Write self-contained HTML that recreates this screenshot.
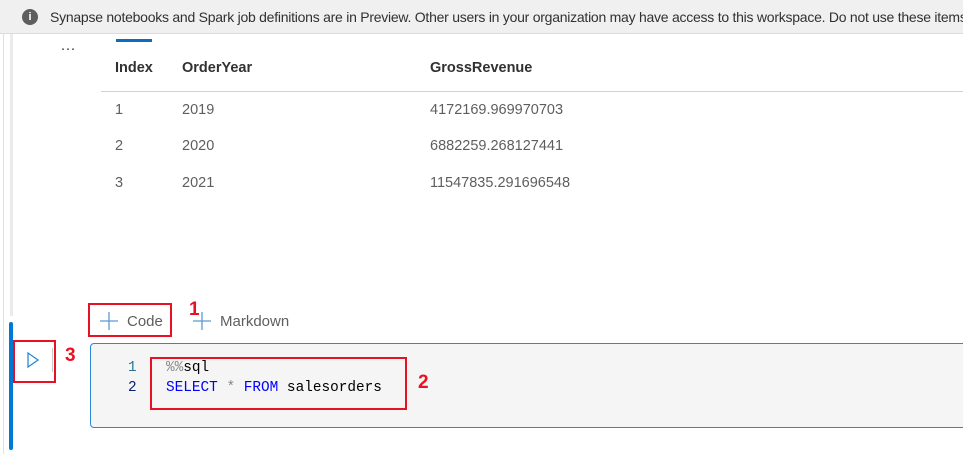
<!DOCTYPE html>
<html><head><style>
html,body{margin:0;width:963px;height:454px;overflow:hidden;}
body{background:#fff;position:relative;font-family:"Liberation Sans",sans-serif;}
.abs{position:absolute;}
.banner{left:0;top:0;width:963px;height:33px;background:#f0f0f0;border-bottom:1px solid #dcdcdc;}
.t{font-size:14.5px;color:#323130;white-space:nowrap;}
.g{color:#605e5c;}
.red{border:2px solid #e81123;box-sizing:border-box;}
.rn{color:#e81123;font-weight:bold;font-size:19px;}
.mono{font-family:"Liberation Mono",monospace;font-size:14.4px;white-space:pre;}
.clip{left:0;top:0;width:963px;height:454px;overflow:hidden;}
</style></head><body>
<div class="abs clip">
<div class="abs banner"></div>
<div class="abs" style="left:22px;top:9px;width:16px;height:16px;border-radius:50%;background:#605e5c;color:#fff;font-size:11px;font-weight:bold;text-align:center;line-height:16px;">i</div>
<div class="abs t" style="left:50px;top:9px;font-size:14px;letter-spacing:-0.25px;">Synapse notebooks and Spark job definitions are in Preview. Other users in your organization may have access to this workspace. Do not use these items u</div>
<div class="abs" style="left:3px;top:34px;width:1px;height:420px;background:#e1e1e1;"></div>
<div class="abs" style="left:10px;top:34px;width:3px;height:282px;background:#ebebeb;"></div>
<div class="abs" style="left:9px;top:322px;width:4px;height:128px;background:#0078d4;border-radius:2px;"></div>
<div class="abs t" style="left:61px;top:38px;color:#323130;letter-spacing:1px;">...</div>
<div class="abs" style="left:116px;top:39px;width:36px;height:3px;background:#0f6cbd;"></div>
<div class="abs t" style="left:115px;top:60px;font-weight:600;">Index</div>
<div class="abs t" style="left:182px;top:60px;font-weight:600;">OrderYear</div>
<div class="abs t" style="left:430px;top:60px;font-weight:600;">GrossRevenue</div>
<div class="abs" style="left:101px;top:91px;width:862px;height:1px;background:#d1d1d1;"></div>
<div class="abs t g" style="left:115px;top:102px;">1</div><div class="abs t g" style="left:182px;top:102px;">2019</div><div class="abs t g" style="left:430px;top:102px;">4172169.969970703</div>
<div class="abs t g" style="left:115px;top:138px;">2</div><div class="abs t g" style="left:182px;top:138px;">2020</div><div class="abs t g" style="left:430px;top:138px;">6882259.268127441</div>
<div class="abs t g" style="left:115px;top:175px;">3</div><div class="abs t g" style="left:182px;top:175px;">2021</div><div class="abs t g" style="left:430px;top:175px;">11547835.291696548</div>

<svg class="abs" style="left:99px;top:311px" width="20" height="20"><path d="M10 1V19M1 10H19" stroke="#5a9bd5" stroke-width="1.3"/></svg>
<div class="abs t g" style="left:127px;top:313px;font-size:15px;">Code</div>
<div class="abs red" style="left:88px;top:303px;width:84px;height:34px;"></div>
<div class="abs rn" style="left:189px;top:299px;">1</div>
<svg class="abs" style="left:192px;top:311px" width="20" height="20"><path d="M10 1V19M1 10H19" stroke="#5a9bd5" stroke-width="1.3"/></svg>
<div class="abs t g" style="left:220px;top:313px;font-size:15px;">Markdown</div>

<div class="abs" style="left:90px;top:343px;width:880px;height:85px;box-sizing:border-box;border:1px solid #2b88d8;border-radius:4px;background:#f5f5f5;"></div>
<div class="abs mono" style="left:128px;top:360px;color:#237893;">1</div>
<div class="abs mono" style="left:128px;top:380px;color:#0b216f;">2</div>
<div class="abs mono" style="left:166px;top:360px;"><span style="color:#888">%%</span>sql</div>
<div class="abs mono" style="left:166px;top:380px;"><span style="color:#0000ff">SELECT</span> <span style="color:#888">*</span> <span style="color:#0000ff">FROM</span> salesorders</div>
<div class="abs red" style="left:150px;top:357px;width:257px;height:53px;"></div>
<div class="abs rn" style="left:418px;top:372px;">2</div>

<svg class="abs" style="left:26px;top:351px" width="14" height="18"><path d="M2 2L12 9L2 16Z" fill="none" stroke="#2b88d8" stroke-width="1.3"/></svg>
<div class="abs" style="left:52px;top:348px;width:1px;height:24px;background:#c8c8c8;"></div>
<div class="abs red" style="left:13px;top:340px;width:43px;height:43px;"></div>
<div class="abs rn" style="left:65px;top:345px;">3</div>
</div>
</body></html>
